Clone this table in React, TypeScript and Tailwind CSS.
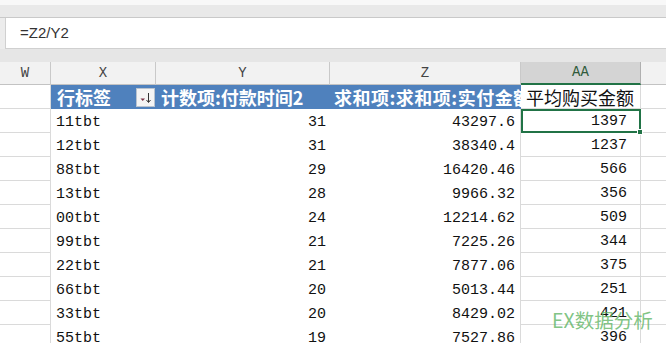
import React from 'react'

const rows = [
  ['11tbt', '31', '43297.6', '1397'],
  ['12tbt', '31', '38340.4', '1237'],
  ['88tbt', '29', '16420.46', '566'],
  ['13tbt', '28', '9966.32', '356'],
  ['00tbt', '24', '12214.62', '509'],
  ['99tbt', '21', '7225.26', '344'],
  ['22tbt', '21', '7877.06', '375'],
  ['66tbt', '20', '5013.44', '251'],
  ['33tbt', '20', '8429.02', '421'],
  ['55tbt', '19', '7527.86', '396'],
]

const cols = 'grid grid-cols-[51px_105px_174px_191px_120px_1fr]'

function FilterButton() {
  return (
    <div className="w-[19px] h-[19px] bg-[#f4f4f4] border border-[#b9c3cf] flex items-center justify-center">
      <svg width="15" height="15" viewBox="0 0 15 15">
        <path d="M2.5 8.5 L7 8.5 L4.75 11 Z" fill="#7a3346" />
        <path d="M10.5 3 L10.5 12" stroke="#333" strokeWidth="1" />
        <path d="M8.5 10 L10.5 12.5 L12.5 10" stroke="#333" strokeWidth="1" fill="none" />
      </svg>
    </div>
  )
}

export default function App() {
  return (
    <div className="w-[666px] h-[343px] overflow-hidden bg-white relative font-['Liberation_Mono','Noto_Sans_CJK_SC',monospace] text-[#111]">
      {/* 功能区底部 */}
      <div className="h-[5px] bg-[#f8f8f8]" />
      <div className="h-[13px] bg-[#e9e9e9] border-b border-[#c9c9c9]" />

      {/* 编辑栏 */}
      <div className="h-[31px] flex bg-[#ececec]">
        <div className="w-[5px]" />
        <div className="flex-1 bg-white border-l border-b border-[#d0d0d0] flex items-center pl-[14px] font-['Liberation_Sans',sans-serif] text-[15px] text-[#333]">
          =Z2/Y2
        </div>
      </div>
      <div className="h-[13px] bg-[#e6e6e6]" />

      {/* 列标 */}
      <div className={`${cols} h-[23px] bg-[#f2f2f2] border-b border-[#c3c3c3] text-[14px] text-[#444]`}>
        <div className="border-r border-[#c9c9c9] flex items-center justify-center">W</div>
        <div className="border-r border-[#c9c9c9] flex items-center justify-center">X</div>
        <div className="border-r border-[#c9c9c9] flex items-center justify-center">Y</div>
        <div className="border-r border-[#c9c9c9] flex items-center justify-center">Z</div>
        <div className="border-r border-[#b0b0b0] bg-[#d4d4d4] border-b-2 border-b-[#217346] flex items-center justify-center text-[#2f5a3a]">AA</div>
        <div />
      </div>

      {/* 数据透视表标题 */}
      <div className={`${cols} h-[24px]`}>
        <div className="border-r border-b border-[#dadada]" />
        <div className="bg-[#4f81bd] flex items-center justify-between pl-[6px] pr-[1px] text-white text-[18px] font-bold font-['Noto_Sans_CJK_SC',sans-serif] leading-none">
          <span>行标签</span>
          <FilterButton />
        </div>
        <div className="bg-[#4f81bd] flex items-center pl-[5px] text-white text-[18px] font-bold font-['Noto_Sans_CJK_SC',sans-serif] leading-none whitespace-nowrap">
          计数项:付款时间2
        </div>
        <div className="bg-[#4f81bd] flex items-center pl-[4px] text-white text-[18px] font-bold font-['Noto_Sans_CJK_SC',sans-serif] leading-none whitespace-nowrap overflow-hidden tracking-[0.5px]">
          求和项:求和项:实付金额
        </div>
        <div className="border-r border-b border-[#dadada] flex items-center pl-[5px] text-[18px] font-['Noto_Sans_CJK_SC',sans-serif] leading-none whitespace-nowrap">
          平均购买金额
        </div>
        <div className="border-b border-[#dadada]" />
      </div>

      {/* 数据行 */}
      {rows.map((r, i) => (
        <div key={r[0]} className={`${cols} h-[24px] text-[15px] leading-[18px]`}>
          <div className="border-r border-b border-[#dadada]" />
          <div className="flex items-end pb-[1px] pl-[5px]">{r[0]}</div>
          <div className="flex items-end justify-end pb-[1px] pr-[4px]">{r[1]}</div>
          <div className="flex items-end justify-end pb-[1px] pr-[5px] border-r border-[#dadada]">{r[2]}</div>
          <div
            className={
              i === 0
                ? 'relative flex items-end justify-end pb-0 pr-[12px] border-2 border-[#217346]'
                : 'flex items-end justify-end pb-[1px] pr-[13px] border-r border-b border-[#dadada]'
            }
          >
            {r[3]}
            {i === 0 && (
              <span className="absolute right-[-4px] bottom-[-4px] w-[6px] h-[6px] bg-[#217346] border border-white" />
            )}
          </div>
          <div className="border-b border-[#dadada]" />
        </div>
      ))}

      {/* 水印 */}
      <div className="absolute left-[552px] top-[310px] text-[19.5px] leading-none text-[#5fb565]/80 font-['Noto_Sans_CJK_SC',sans-serif] whitespace-nowrap">
        EX数据分析
      </div>
    </div>
  )
}
